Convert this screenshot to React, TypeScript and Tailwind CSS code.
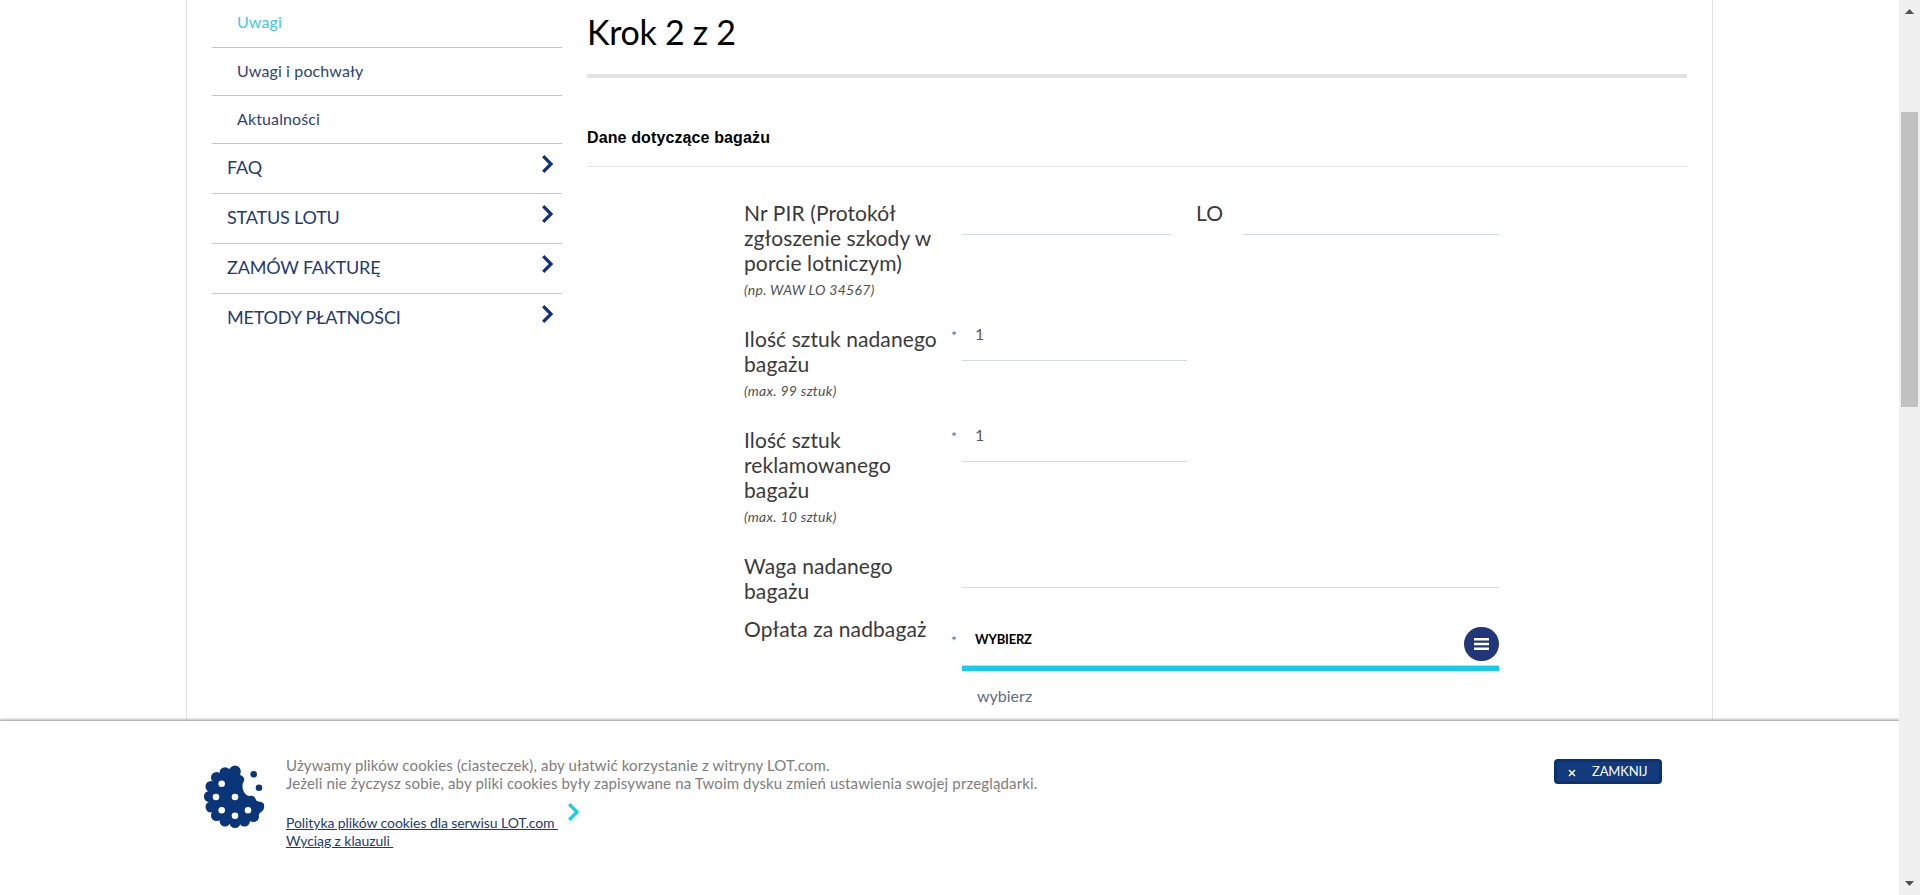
import type { ReactNode } from 'react';

const subItems = [
  { label: 'Uwagi', active: true },
  { label: 'Uwagi i pochwały', active: false },
  { label: 'Aktualności', active: false },
];
const mainItems = ['FAQ', 'STATUS LOTU', 'ZAMÓW FAKTURĘ', 'METODY PŁATNOŚCI'];

function Chevron({ className }: { className: string }) {
  return (
    <svg className={className} width="12" height="18" viewBox="0 0 12 18" fill="none" stroke="currentColor" strokeWidth="3.2">
      <path d="M1.2 1.2 9 9 1.2 16.8" />
    </svg>
  );
}

function Cookie() {
  const rim = [
    [32, 7], [41.5, 57], [50.5, 52.5], [55.6, 43.2], [32, 58.6], [22, 57], [13.5, 51.5], [8, 43],
    [6.4, 32.5], [8, 22.5], [13.5, 13.5], [22, 8.7],
  ];
  const chips = [[18.7, 19.7], [13, 33], [32, 33], [18.7, 46.3], [32, 51.7], [45, 46.3]];
  return (
    <svg width="64" height="65" viewBox="0 0 64 65" fill="#0a3578">
      <path d="M33 3c3 0 4.6 2 4.6 4.5L37.2 11c2.5.8 4.3 2.8 4 5-.2 2-1.7 3-1.7 5 0 3 .3 5 1.5 7 1.2 2 2.7 3.5 5 4 2-.5 4-.3 5.5 1 1.2 1.2 1 2.5 2 3.7 2.5 1.5 4 .8 6.5 2 1.7 2 1.5 4 0 6L54 53 42 60H22L9 48 4.5 33 9 18l13-12z" />
      {rim.map(([x, y]) => <circle key={`${x}-${y}`} cx={x} cy={y} r="5.5" />)}
      {chips.map(([x, y]) => <circle key={`${x}-${y}`} cx={x} cy={y} r="3.3" fill="#fff" />)}
      <circle cx="50.7" cy="10.3" r="3.3" />
      <circle cx="56" cy="23.7" r="3.3" />
    </svg>
  );
}

function Row({ label, hint, height, children }: { label: string; hint?: string; height: string; children: ReactNode }) {
  return (
    <div className={`flex ${height}`}>
      <div className="-mt-px w-[200px] shrink-0 text-[21px] leading-[25px] tracking-[0.1px] text-[#3a3a3a]">
        {label}
        {hint && <div className="pt-0.5 text-[14px] leading-[26px] tracking-[0.28px] text-[#505050] italic">{hint}</div>}
      </div>
      <div className="w-[18px] shrink-0" />
      {children}
    </div>
  );
}

function Field({ value, width }: { value?: string; width: string }) {
  return (
    <div className={`flex h-[34px] border-b border-[#d3dbe6] ${width}`}>
      {value && <span className="-ml-[11px] text-[14px] leading-[17px] text-[#5b6b85]">*</span>}
      {value && <span className="ml-[18px] text-[16px] leading-[14px] text-[#5a5a5a]">{value}</span>}
    </div>
  );
}

export default function App() {
  return (
    <div className="flex h-[895px] w-[1920px] overflow-hidden bg-white font-['Lato',sans-serif]">
      <div className="flex w-[1899px] flex-col overflow-hidden">
        <div className="h-[721px] overflow-hidden pl-[186px]">
          <div className="flex h-full w-[1527px] border-x border-[#e2e2e2] pl-[25px]">
            <nav className="w-[350px] shrink-0">
              {subItems.map((item) => (
                <div key={item.label} className={`h-[48px] border-b border-[#c6c6d4] pl-[25px] text-[16px] leading-[24px] tracking-[0.12px] ${item.active ? 'pt-[10px] text-[#3cc8ee]' : 'pt-[11px] text-[#2d427b]'}`}>
                  {item.label}
                </div>
              ))}
              {mainItems.map((label) => (
                <div key={label} className="flex h-[50px] items-start justify-between border-b border-[#c6c6d4] pt-[11px] pr-[8px] pl-[15px] text-[18px] leading-[24px] tracking-[-0.18px] text-[#233a77] last:border-b-0">
                  <span>{label}</span>
                  <Chevron className="text-[#0e2f7e]" />
                </div>
              ))}
            </nav>
            <main className="ml-[25px] w-[1100px] shrink-0">
              <h1 className="h-[78px] border-b-4 border-[#e2e2e2] pt-[10px] text-[34px] leading-[44px] tracking-[-0.3px] text-black">Krok 2 z 2</h1>
              <h2 className="h-[89px] border-b border-[#e2e2e2] pt-[48px] font-['Liberation_Sans',sans-serif] text-[16px] leading-[24px] font-bold tracking-[0.12px] text-black">Dane dotyczące bagażu</h2>
              <div className="pt-[34px] pl-[157px]">
                <Row label="Nr PIR (Protokół zgłoszenie szkody w porcie lotniczym)" hint="(np. WAW LO 34567)" height="h-[126px]">
                  <Field width="w-[209px]" />
                  <span className="-mt-px w-[72px] pl-[25px] text-[21px] leading-[25px] tracking-[0.1px] text-[#3a3a3a]">LO</span>
                  <Field width="w-[256px]" />
                </Row>
                <Row label="Ilość sztuk nadanego bagażu" hint="(max. 99 sztuk)" height="h-[101px]">
                  <Field value="1" width="w-[225px]" />
                </Row>
                <Row label="Ilość sztuk reklamowanego bagażu" hint="(max. 10 sztuk)" height="h-[126px]">
                  <Field value="1" width="w-[225px]" />
                </Row>
                <Row label="Waga nadanego bagażu" height="h-[63px]">
                  <Field width="w-[537px]" />
                </Row>
                <Row label="Opłata za nadbagaż" height="h-[104px]">
                  <div className="w-[537px]">
                    <div className="flex h-[49px] items-start justify-between border-b border-[#d3d3d3] pt-[10px]">
                      <div className="flex">
                        <span className="-ml-[11px] text-[14px] leading-[28px] text-[#5b6b85]">*</span>
                        <span className="ml-[18px] text-[13px] leading-[25px] font-bold tracking-[-0.2px] text-black">WYBIERZ</span>
                      </div>
                      <span className="flex h-[34px] w-[35px] items-center justify-center rounded-full bg-[#22367a]">
                        <svg width="15" height="12" viewBox="0 0 15 12" fill="#fff">
                          <path d="M0 0h15v2.5H0zM0 4.8h15v2.5H0zM0 9.5h15V12H0z" />
                        </svg>
                      </span>
                    </div>
                    <div className="h-[5px] bg-[#13ccef]" />
                    <div className="pt-[13px] pl-[15px] text-[16px] leading-[24px] text-[#5d6c87]">wybierz</div>
                  </div>
                </Row>
              </div>
            </main>
          </div>
        </div>
        <footer className="relative flex h-[174px] items-start bg-white pl-[203px] shadow-[0_0_3px_1px_#888]">
          <div className="mt-[43px] w-[83px] shrink-0"><Cookie /></div>
          <div className="w-[1268px] shrink-0 pt-[35px]">
            <p className="text-[15px] leading-[18px] tracking-[0.14px] text-[#7d7d7d]">
              Używamy plików cookies (ciasteczek), aby ułatwić korzystanie z witryny LOT.com.<br />
              Jeżeli nie życzysz sobie, aby pliki cookies były zapisywane na Twoim dysku zmień ustawienia swojej przeglądarki.
            </p>
            <div className="flex pt-[10px] text-[14px] leading-[18px] text-[#1c3a78]">
              <div className="w-[282px] pt-[12px] tracking-[-0.08px] whitespace-pre">
                <div className="underline">{'Polityka plików cookies dla serwisu LOT.com '}</div>
                <div className="underline">{'Wyciąg z klauzuli '}</div>
              </div>
              <Chevron className="mt-[1px] text-[#13ccef]" />
            </div>
          </div>
          <button className="mt-[38px] flex h-[25px] w-[108px] items-center rounded-[4px] border-[3px] border-[#0a3172] bg-[#123a7d] pl-[11px] text-white">
            <svg width="8" height="8" viewBox="0 0 8 8" stroke="#fff" strokeWidth="1.5" className="mt-[3px]"><path d="m1 1 6 6M7 1 1 7" /></svg>
            <span className="-mt-px ml-[16px] text-[13px] leading-[18px] tracking-[-0.15px]">ZAMKNIJ</span>
          </button>
        </footer>
      </div>
      <div className="flex w-[21px] flex-col items-center bg-[#f0f0f0] pt-[9px] pb-[9px]">
        <svg width="9" height="5" viewBox="0 0 9 5" fill="#505050"><path d="M0 5 4.5 0 9 5z" /></svg>
        <div className="mt-[98px] h-[295px] w-[17px] bg-[#c1c1c1]" />
        <svg className="mt-auto" width="9" height="5" viewBox="0 0 9 5" fill="#505050"><path d="M0 0h9L4.5 5z" /></svg>
      </div>
    </div>
  );
}
